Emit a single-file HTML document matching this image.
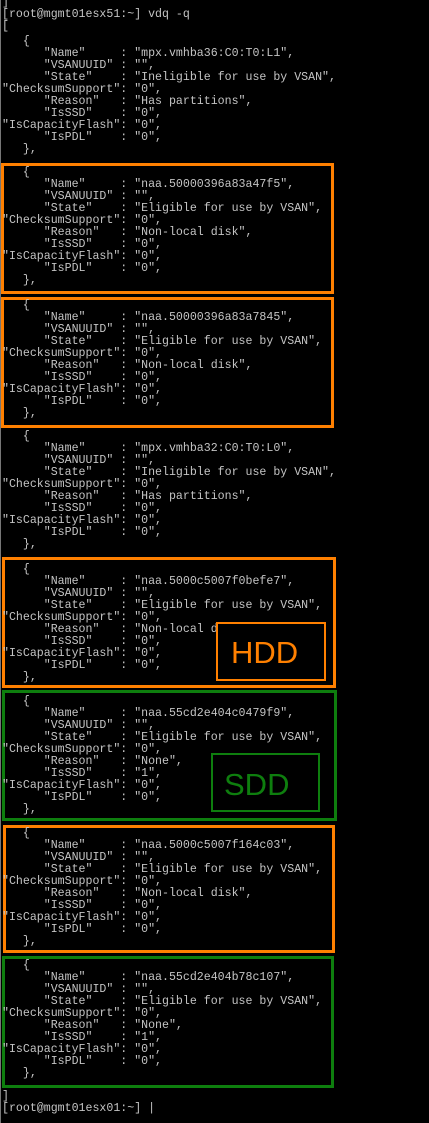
<!DOCTYPE html>
<html><head><meta charset="utf-8"><style>
html,body{margin:0;padding:0;background:#000;width:429px;height:1123px;overflow:hidden;position:relative}
pre{position:absolute;left:2px;margin:0;font-family:"Liberation Mono",monospace;font-size:11.6px;line-height:12px;color:#c4c4c4;white-space:pre}
.b{position:absolute;box-sizing:border-box}
.o{border:3px solid #ff8000}
.g{border:3px solid #0e7e0e}
.lbl{position:absolute;box-sizing:border-box;background:#000;font-family:"Liberation Sans",sans-serif;font-size:31px;line-height:1}
.vl{position:absolute;left:0;top:0;width:1px;height:1123px;background:#777}
</style></head><body>
<div class="vl"></div>
<div class="b o" style="left:1px;top:163px;width:333px;height:131px"></div>
<div class="b o" style="left:1px;top:297px;width:333px;height:131px"></div>
<div class="b o" style="left:2px;top:557px;width:334px;height:131px"></div>
<div class="b g" style="left:2px;top:690px;width:335px;height:131px"></div>
<div class="b o" style="left:3px;top:825px;width:332px;height:128px"></div>
<div class="b g" style="left:2px;top:956px;width:332px;height:132px"></div>
<pre style="top:-3px">]
[root@mgmt01esx51:~] vdq -q
[</pre>
<pre style="top:36px">   {
      "Name"     : "mpx.vmhba36:C0:T0:L1",
      "VSANUUID" : "",
      "State"    : "Ineligible for use by VSAN",
"ChecksumSupport": "0",
      "Reason"   : "Has partitions",
      "IsSSD"    : "0",
"IsCapacityFlash": "0",
      "IsPDL"    : "0",
   },</pre>
<pre style="top:167px">   {
      "Name"     : "naa.50000396a83a47f5",
      "VSANUUID" : "",
      "State"    : "Eligible for use by VSAN",
"ChecksumSupport": "0",
      "Reason"   : "Non-local disk",
      "IsSSD"    : "0",
"IsCapacityFlash": "0",
      "IsPDL"    : "0",
   },</pre>
<pre style="top:300px">   {
      "Name"     : "naa.50000396a83a7845",
      "VSANUUID" : "",
      "State"    : "Eligible for use by VSAN",
"ChecksumSupport": "0",
      "Reason"   : "Non-local disk",
      "IsSSD"    : "0",
"IsCapacityFlash": "0",
      "IsPDL"    : "0",
   },</pre>
<pre style="top:431px">   {
      "Name"     : "mpx.vmhba32:C0:T0:L0",
      "VSANUUID" : "",
      "State"    : "Ineligible for use by VSAN",
"ChecksumSupport": "0",
      "Reason"   : "Has partitions",
      "IsSSD"    : "0",
"IsCapacityFlash": "0",
      "IsPDL"    : "0",
   },</pre>
<pre style="top:564px">   {
      "Name"     : "naa.5000c5007f0befe7",
      "VSANUUID" : "",
      "State"    : "Eligible for use by VSAN",
"ChecksumSupport": "0",
      "Reason"   : "Non-local disk",
      "IsSSD"    : "0",
"IsCapacityFlash": "0",
      "IsPDL"    : "0",
   },</pre>
<pre style="top:696px">   {
      "Name"     : "naa.55cd2e404c0479f9",
      "VSANUUID" : "",
      "State"    : "Eligible for use by VSAN",
"ChecksumSupport": "0",
      "Reason"   : "None",
      "IsSSD"    : "1",
"IsCapacityFlash": "0",
      "IsPDL"    : "0",
   },</pre>
<pre style="top:828px">   {
      "Name"     : "naa.5000c5007f164c03",
      "VSANUUID" : "",
      "State"    : "Eligible for use by VSAN",
"ChecksumSupport": "0",
      "Reason"   : "Non-local disk",
      "IsSSD"    : "0",
"IsCapacityFlash": "0",
      "IsPDL"    : "0",
   },</pre>
<pre style="top:960px">   {
      "Name"     : "naa.55cd2e404b78c107",
      "VSANUUID" : "",
      "State"    : "Eligible for use by VSAN",
"ChecksumSupport": "0",
      "Reason"   : "None",
      "IsSSD"    : "1",
"IsCapacityFlash": "0",
      "IsPDL"    : "0",
   },</pre>
<pre style="top:1091px">]
[root@mgmt01esx01:~] |</pre>
<div class="lbl" style="left:216px;top:622px;width:110px;height:59px;border:2px solid #ff8000;color:#ff8000;padding:13px 0 0 13px">HDD</div>
<div class="lbl" style="left:211px;top:753px;width:109px;height:59px;border:2px solid #0e7e0e;color:#0e7e0e;padding:14px 0 0 11px">SDD</div>
</body></html>
